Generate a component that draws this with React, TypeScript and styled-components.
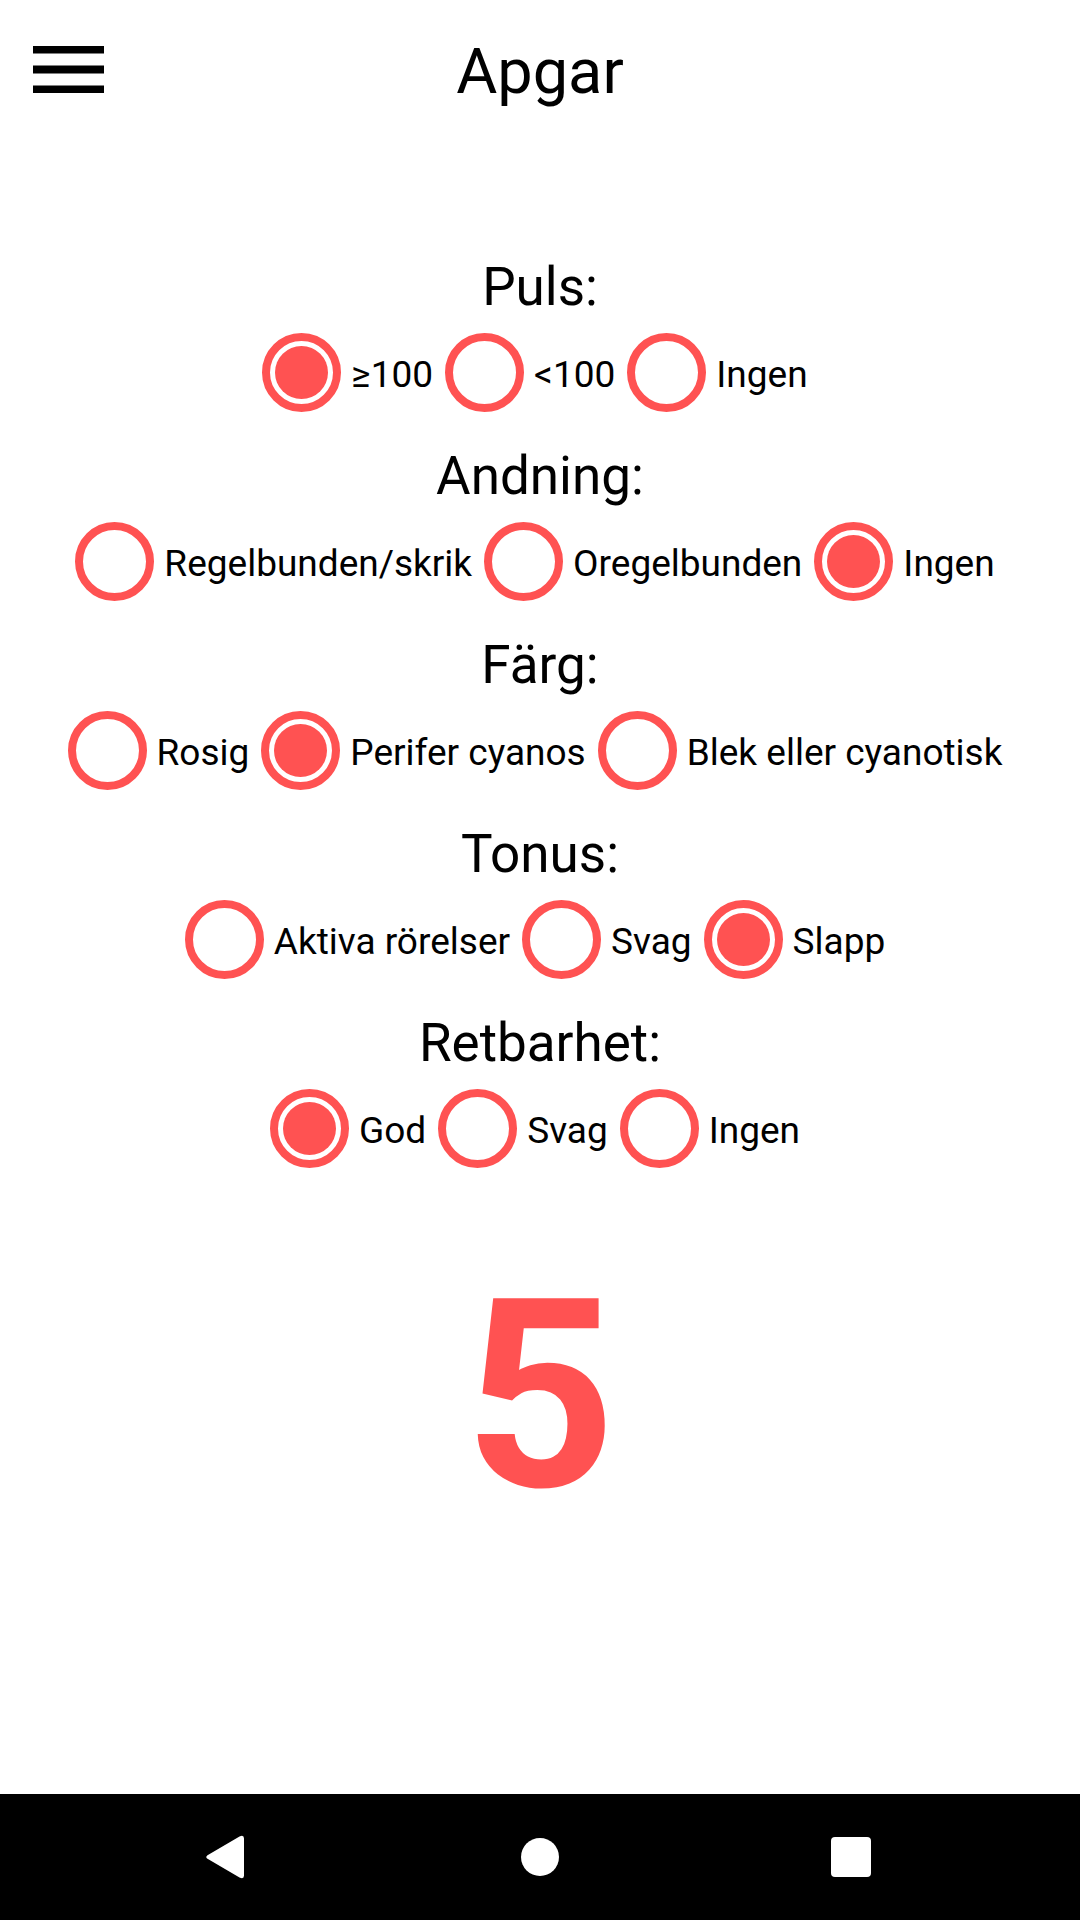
import React, { useState } from "react";
import styled, { createGlobalStyle } from "styled-components";

const Global = createGlobalStyle`
  *, *::before, *::after { box-sizing: border-box; }
  body { margin: 0; background: #fff; color: #000; font-family: Roboto, "Noto Sans", sans-serif; }
`;
const Screen = styled.div`
  min-height: 100vh;
  display: flex;
  flex-direction: column;
`;
const Header = styled.header`
  display: grid;
  grid-template-columns: 72px 1fr 72px;
  align-items: center;
  height: 140px;
  padding: 0 32px;
`;
const MenuButton = styled.button`
  width: 72px;
  height: 48px;
  padding: 0;
  border: 0;
  background: none;
  svg { display: block; }
`;
const Title = styled.h1`
  margin: 0;
  padding-top: 4px;
  text-align: center;
  font-size: 63px;
  line-height: 74px;
  font-weight: 400;
`;
const Form = styled.form`
  flex: 1;
  padding-top: 116px;
  text-align: center;
`;
const Group = styled.fieldset`
  margin: 0;
  padding: 0 0 33px;
  border: 0;
`;
const Legend = styled.legend`
  width: 100%;
  padding: 0;
  font-size: 53px;
  line-height: 62px;
`;
const Options = styled.div`
  display: flex;
  justify-content: center;
  padding: 15px 10px 0 0;
  gap: 12px;
`;
const Option = styled.label`
  display: flex;
  align-items: center;
  gap: 10px;
  font-size: 37px;
  line-height: 44px;
  white-space: nowrap;
`;
const OptionText = styled.span`
  padding-top: 4px;
`;
const Radio = styled.input`
  appearance: none;
  flex: none;
  width: 79px;
  height: 79px;
  margin: 0;
  border: 8px solid #ff5252;
  border-radius: 50%;
  &:checked {
    padding: 5px;
    background: #ff5252 content-box;
  }
`;
const Score = styled.output`
  display: block;
  margin-top: 40px;
  color: #ff5252;
  font-size: 264px;
  line-height: 310px;
  font-weight: 700;
`;
const NavBar = styled.nav`
  display: flex;
  justify-content: space-around;
  align-items: center;
  height: 126px;
  padding: 0 70px;
  background: #000;
`;
const NavButton = styled.button`
  width: 48px;
  height: 48px;
  padding: 0;
  border: 0;
  background: none;
  svg { display: block; }
`;

const groups = [
  { name: "Puls", options: ["≥100", "<100", "Ingen"], initial: 0 },
  { name: "Andning", options: ["Regelbunden/skrik", "Oregelbunden", "Ingen"], initial: 2 },
  { name: "Färg", options: ["Rosig", "Perifer cyanos", "Blek eller cyanotisk"], initial: 1 },
  { name: "Tonus", options: ["Aktiva rörelser", "Svag", "Slapp"], initial: 2 },
  { name: "Retbarhet", options: ["God", "Svag", "Ingen"], initial: 0 },
];

export default function App() {
  const [selected, setSelected] = useState(groups.map((group) => group.initial));
  const score = selected.reduce((sum, index) => sum + 2 - index, 0);
  return (
    <Screen>
      <Global />
      <Header>
        <MenuButton type="button" aria-label="Meny">
          <svg width="72" height="48" viewBox="0 0 72 48"><path d="M1 0h71v7.5H1zM1 19.5h71v8H1zM1 39.500h71v7.500H1z" /></svg>
        </MenuButton>
        <Title>Apgar</Title>
      </Header>
      <Form>
        {groups.map((group, row) => (
          <Group key={group.name}>
            <Legend>{group.name}:</Legend>
            <Options>
              {group.options.map((option, index) => (
                <Option key={option}>
                  <Radio
                    type="radio"
                    name={group.name}
                    checked={selected[row] === index}
                    onChange={() => setSelected(selected.map((value, i) => (i === row ? index : value)))}
                  />
                  <OptionText>{option}</OptionText>
                </Option>
              ))}
            </Options>
          </Group>
        ))}
        <Score>{score}</Score>
      </Form>
      <NavBar>
        <NavButton type="button" aria-label="Tillbaka">
          <svg width="48" height="48" viewBox="0 0 48 48" fill="#fff"><path d="M4.500 22.200 36.500 3.500q4.500-2 4.500 2v37q0 4-4.500 2L4.500 25.800q-2.500-1.800 0-3.600z" /></svg>
        </NavButton>
        <NavButton type="button" aria-label="Hem">
          <svg width="48" height="48" viewBox="0 0 48 48" fill="#fff"><circle cx="24" cy="24" r="19" /></svg>
        </NavButton>
        <NavButton type="button" aria-label="Översikt">
          <svg width="48" height="48" viewBox="0 0 48 48" fill="#fff"><rect x="2" y="4" width="40" height="40" rx="4" /></svg>
        </NavButton>
      </NavBar>
    </Screen>
  );
}
